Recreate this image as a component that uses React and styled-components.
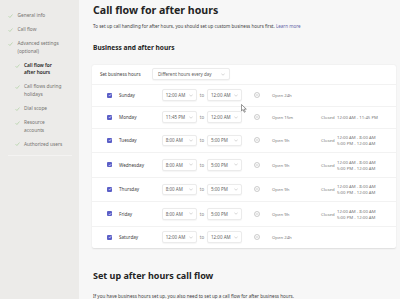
import React from 'react'
import styled, { createGlobalStyle } from 'styled-components'

const GlobalStyle = createGlobalStyle`
html, body {
    margin: 0;
    padding: 0;
    background: #f7f7f7;
    font-family: "Noto Sans", "Open Sans", sans-serif;
}
* { box-sizing: border-box; }
`

const navItems = [
    { label: ['General info'], sub: false },
    { label: ['Call flow'], sub: false },
    { label: ['Advanced settings', '(optional)'], sub: false },
    { label: ['Call flow for', 'after hours'], sub: true, active: true },
    { label: ['Call flows during', 'holidays'], sub: true },
    { label: ['Dial scope'], sub: true },
    { label: ['Resource', 'accounts'], sub: true },
    { label: ['Authorized users'], sub: true },
]

const days = [
    { name: 'Sunday', from: '12:00 AM', to: '12:00 AM', open: 'Open 24h', closed: [] },
    { name: 'Monday', from: '11:45 PM', to: '12:00 AM', open: 'Open 15m', closed: ['12:00 AM - 11:45 PM'] },
    { name: 'Tuesday', from: '8:00 AM', to: '5:00 PM', open: 'Open 9h', closed: ['12:00 AM - 8:00 AM', '5:00 PM - 12:00 AM'] },
    { name: 'Wednesday', from: '8:00 AM', to: '5:00 PM', open: 'Open 9h', closed: ['12:00 AM - 8:00 AM', '5:00 PM - 12:00 AM'] },
    { name: 'Thursday', from: '8:00 AM', to: '5:00 PM', open: 'Open 9h', closed: ['12:00 AM - 8:00 AM', '5:00 PM - 12:00 AM'] },
    { name: 'Friday', from: '8:00 AM', to: '5:00 PM', open: 'Open 9h', closed: ['12:00 AM - 8:00 AM', '5:00 PM - 12:00 AM'] },
    { name: 'Saturday', from: '12:00 AM', to: '12:00 AM', open: 'Open 24h', closed: [] },
]

const Check = () => (
    <svg width="5" height="4" viewBox="0 0 10 8" fill="none">
        <path d="M1 4.2 L3.8 7 L9 1" stroke="#9cc98c" strokeWidth="1.1" />
    </svg>
)

const Chevron = () => (
    <svg width="4" height="3" viewBox="0 0 8 5" fill="none">
        <path d="M0.5 0.5 L4 4 L7.5 0.5" stroke="#9a9a9a" strokeWidth="0.8" />
    </svg>
)

const Select = ({ value, wide }) => (
    <SelectBox wide={wide}>
        <span>{value}</span>
        <Chevron />
    </SelectBox>
)

const App = () => {
    return (
        <>
            <GlobalStyle />
            <Page>
                <Sidebar>
                    {navItems.map((item, i) => (
                        <NavItem key={i} sub={item.sub} active={item.active}>
                            <NavCheck><Check /></NavCheck>
                            <span>
                                {item.label.map((l, j) => <NavLine key={j}>{l}</NavLine>)}
                            </span>
                        </NavItem>
                    ))}
                    <NavDivider />
                </Sidebar>
                <Main>
                    <Title>Call flow for after hours</Title>
                    <Desc>
                        To set up call handling for after hours, you should set up custom business hours first. <Link>Learn more</Link>
                    </Desc>
                    <SubTitle>Business and after hours</SubTitle>
                    <Card>
                        <HeaderRow>
                            <HeaderLabel>Set business hours</HeaderLabel>
                            <Select value="Different hours every day" wide />
                        </HeaderRow>
                        {days.map((d, i) => (
                            <DayRow key={d.name} tall={d.closed.length > 1} last={i === days.length - 1}>
                                <CheckCell>
                                    <Checkbox>
                                        <svg width="4" height="4" viewBox="0 0 10 10" fill="none">
                                            <path d="M2 5.2 L4.2 7.4 L8.2 2.8" stroke="#fff" strokeWidth="1.6" />
                                        </svg>
                                    </Checkbox>
                                </CheckCell>
                                <DayName>{d.name}</DayName>
                                <Select value={d.from} />
                                <To>to</To>
                                <Select value={d.to} />
                                <IconCell>
                                    <svg width="6" height="6" viewBox="0 0 12 12" fill="none">
                                        <circle cx="6" cy="6" r="5" stroke="#9a9a9a" strokeWidth="1" />
                                        <path d="M3.5 6 H8.5" stroke="#9a9a9a" strokeWidth="1" />
                                    </svg>
                                </IconCell>
                                <Small>{d.open}</Small>
                                <Small>{d.closed.length ? 'Closed' : ''}</Small>
                                <Ranges>
                                    {d.closed.map(r => <div key={r}>{r}</div>)}
                                </Ranges>
                                {i === 0 && (
                                    <Cursor width="6" height="9" viewBox="0 0 12 18">
                                        <path d="M1 1 L1 14 L4.2 11 L6.5 16.5 L8.6 15.6 L6.3 10.3 L10.6 10.3 Z" fill="#fff" stroke="#333" strokeWidth="1" />
                                    </Cursor>
                                )}
                            </DayRow>
                        ))}
                    </Card>
                    <SectionTitle>Set up after hours call flow</SectionTitle>
                    <Desc2>If you have business hours set up, you also need to set up a call flow for after business hours.</Desc2>
                </Main>
            </Page>
        </>
    )
}

export default App

const Page = styled.div`
display: flex;
width: 400px;
height: 299px;
overflow: hidden;
`
const Sidebar = styled.nav`
width: 79px;
flex-shrink: 0;
background: #ecebe9;
padding: 12px 0 0 7px;
display: flex;
flex-direction: column;
`
const NavItem = styled.div`
display: flex;
align-items: flex-start;
gap: ${props => props.sub ? '4px' : '4.5px'};
padding-left: ${props => props.sub ? '8px' : '1px'};
margin-bottom: 6.6px;
font-size: 4.8px;
line-height: 7.5px;
color: ${props => props.active ? '#252423' : '#74726f'};
font-weight: ${props => props.active ? 600 : 400};
`
const NavCheck = styled.span`
display: flex;
align-items: center;
height: 7.5px;
`
const NavLine = styled.div`
white-space: nowrap;
`
const NavDivider = styled.div`
margin-top: 0.5px;
width: 64px;
margin-left: 1px;
height: 1px;
background: #f4f3f2;
`
const Main = styled.main`
flex: 1;
padding: 3.5px 0 0 13px;
min-width: 0;
`
const Title = styled.h1`
margin: 0;
font-size: 10.6px;
line-height: 13px;
font-weight: 700;
color: #242424;
padding-left: 1px;
`
const Desc = styled.p`
margin: 6px 0 0 1px;
font-size: 4.55px;
line-height: 6px;
color: #424242;
white-space: nowrap;
`
const Link = styled.span`
color: #6264a7;
`
const SubTitle = styled.h2`
margin: 15.5px 0 0 1px;
font-size: 6.6px;
line-height: 8px;
font-weight: 700;
color: #242424;
`
const Card = styled.section`
margin-top: 12.7px;
width: 304px;
background: #fff;
border-radius: 2px;
box-shadow: 0 0.5px 1.5px rgba(0, 0, 0, 0.1);
`
const HeaderRow = styled.div`
height: 20px;
display: flex;
align-items: center;
gap: 8px;
padding-left: 8px;
border-bottom: 1px solid #f2f2f2;
`
const HeaderLabel = styled.span`
font-size: 4.6px;
color: #424242;
width: 44px;
`
const SelectBox = styled.div`
display: flex;
align-items: center;
justify-content: space-between;
width: ${props => props.wide ? '78px' : '35.5px'};
height: 11.5px;
padding: ${props => props.wide ? '0 4px 0 5px' : '0 3px 0 3px'};
border: 0.5px solid #ebebeb;
border-radius: 2px;
background: #fff;
box-shadow: 0 0.5px 1px rgba(0, 0, 0, 0.04);
font-size: 4.5px;
color: #616161;
white-space: nowrap;
`
const DayRow = styled.div`
position: relative;
display: grid;
grid-template-columns: 27px 42.7px 35.3px 10px 36px 29px 49px 16px 1fr;
align-items: center;
height: ${props => props.tall ? '24.5px' : props.last ? '21px' : '22px'};
border-bottom: ${props => props.last ? 'none' : '1px solid #f2f2f2'};
`
const CheckCell = styled.div`
display: flex;
justify-content: flex-end;
padding-right: 7px;
`
const Checkbox = styled.span`
width: 5px;
height: 5px;
border-radius: 1px;
background: #5b5fc7;
display: flex;
align-items: center;
justify-content: center;
`
const DayName = styled.span`
font-size: 4.6px;
color: #424242;
`
const To = styled.span`
font-size: 4.4px;
color: #8a8a8a;
text-align: center;
`
const IconCell = styled.div`
display: flex;
justify-content: center;
`
const Small = styled.span`
font-size: 4.3px;
color: #7a7a7a;
white-space: nowrap;
`
const Ranges = styled.div`
font-size: 4.3px;
line-height: 6px;
color: #7a7a7a;
white-space: nowrap;
`
const Cursor = styled.svg`
position: absolute;
left: 149px;
top: 19px;
`
const SectionTitle = styled.h2`
margin: 22.5px 0 0 1px;
font-size: 9px;
line-height: 11px;
font-weight: 700;
color: #242424;
`
const Desc2 = styled.p`
margin: 11.5px 0 0 1px;
font-size: 4.6px;
line-height: 6px;
color: #424242;
white-space: nowrap;
`
